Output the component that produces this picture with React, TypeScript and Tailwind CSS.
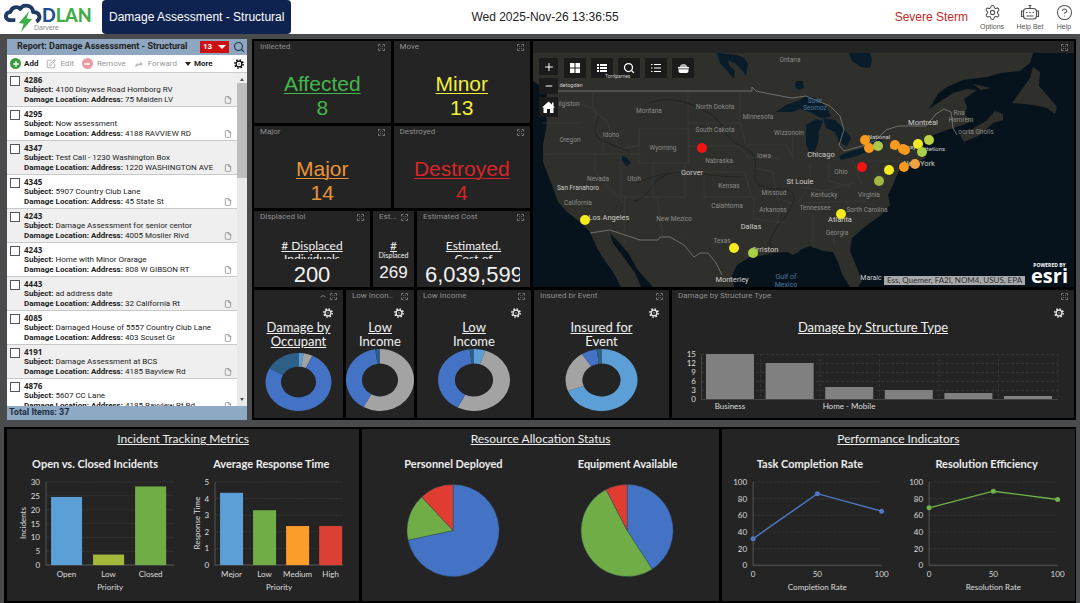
import React from 'react'
import {
  Search,
  SquarePen,
  File,
  Plus,
  Minus,
  Forward,
  Settings,
  CircleQuestionMark,
} from 'lucide-react'

const reports = [
  { id: '4286', subject: '4100 Disywse Road Homborg RV', address: '75 Maiden LV' },
  { id: '4295', subject: 'Now assessment', address: '4188 RAVVIEW RD' },
  { id: '4347', subject: 'Test Call - 1230 Washington Box', address: '1220 WASHINGTON AVE' },
  { id: '4345', subject: '5907 Country Club Lane', address: '45 State St' },
  { id: '4243', subject: 'Damage Assessment for senior centor', address: '4005 Mosiler Rivd' },
  { id: '4243', subject: 'Home with Minor Orarage', address: '808 W GIBSON RT' },
  { id: '4443', subject: 'ad address date', address: '32 Calífornía Rt' },
  { id: '4085', subject: 'Damaged House of 5557 Country Club Lane', address: '403 Scuset Gr' },
  { id: '4191', subject: 'Damage Assessment at BCS', address: '4185 Bayview Rd' },
  { id: '4876', subject: '5607 CC Lane', address: '4185 Bayview Rt Rd' },
]

const stats = [
  { label: 'Inliected', title: 'Affected', value: 8, color: 'text-[#45b649]' },
  { label: 'Move', title: 'Minor', value: 13, color: 'text-[#f2ee3a]' },
  { label: 'Major', title: 'Major', value: 14, color: 'text-[#e8953a]' },
  { label: 'Destroyed', title: 'Destroyed', value: 4, color: 'text-[#d9252a]' },
]

const LIGHT = '#5b9fd6'
const BLUE = '#4472c4'
const DARK = '#2d6088'
const GRAY = '#a3a3a3'
const GREEN = '#70ad47'
const RED = '#e03c31'

// each slice ends at the given clockwise angle, the first one starts at the top
type Slice = { to: number; color: string }

const donuts: {
  label: string
  lines: string[]
  underlined: number
  rx: number
  ry: number
  slices: Slice[]
}[] = [
  {
    label: '',
    lines: ['Damage by', 'Occupant'],
    underlined: 2,
    rx: 33,
    ry: 29,
    slices: [
      { to: 9, color: LIGHT },
      { to: 25, color: GRAY },
      { to: 298, color: BLUE },
      { to: 360, color: DARK },
    ],
  },
  {
    label: 'Low Incon..',
    lines: ['Low', 'Income'],
    underlined: 1,
    rx: 34,
    ry: 31,
    slices: [
      { to: 209, color: GRAY },
      { to: 352, color: BLUE },
      { to: 360, color: DARK },
    ],
  },
  {
    label: 'Low Income',
    lines: ['Low', 'Income'],
    underlined: 1,
    rx: 36,
    ry: 31,
    slices: [
      { to: 18, color: LIGHT },
      { to: 207, color: GRAY },
      { to: 353, color: BLUE },
      { to: 360, color: DARK },
    ],
  },
  {
    label: 'Insured br Event',
    lines: ['Insured for', 'Event'],
    underlined: 1,
    rx: 36,
    ry: 31,
    slices: [
      { to: 249, color: LIGHT },
      { to: 327, color: GRAY },
      { to: 352, color: BLUE },
      { to: 360, color: DARK },
    ],
  },
]

const structureBars = [15, 12, 4, 3, 2, 1]

const states: [string, number, number][] = [
  ['Montana', 116, 60],
  ['North Dokota', 182, 56],
  ['Minnesota', 225, 66],
  ['South Cakota', 182, 79],
  ['Wizzonoin', 256, 82],
  ['Oregon', 37, 89],
  ['Idoho', 78, 84],
  ['Wyoming', 130, 97],
  ['Nabraska', 186, 110],
  ['Iowa', 231, 105],
  ['Nevada', 65, 128],
  ['Utoh', 101, 128],
  ['Kensas', 196, 135],
  ['Missoud', 241, 142],
  ['California', 45, 152],
  ['Calahtoma', 194, 155],
  ['Arkanoss', 240, 159],
  ['New Mezico', 141, 168],
  ['Texas', 189, 190],
  ['Ontana', 257, 9],
  ['Ohio', 308, 121],
  ['Kentucky', 291, 144],
  ['Virginia', 336, 144],
  ['Tennessee', 282, 157],
  ['Sorth Carolina', 334, 159],
  ['Georgia', 304, 182],
  ['ilgiston', 36, 53],
  ['Rna', 426, 62],
  ['Hamrem', 428, 69],
  ['oorta Gholls', 443, 81],
]

const cities: [string, number, number][] = [
  ['San Franahoro', 45, 137],
  ['Los Angeles', 76, 167],
  ['Gorver', 159, 122],
  ['Dallas', 218, 176],
  ['Orriston', 232, 199],
  ['Monterley', 199, 229],
  ['Chicago', 288, 104],
  ['St Louie', 267, 131],
  ['Montreal', 390, 72],
  ['New York', 386, 113],
  ['Atlanta', 307, 169],
]

const pins: [number, number, string][] = [
  [52, 167, '#f4ea1e'],
  [169, 95, '#f01414'],
  [201, 195, '#f4ea1e'],
  [220, 200, '#a8cf45'],
  [332, 87, '#f79a1e'],
  [336, 95, '#f79a1e'],
  [345, 93, '#a8c94a'],
  [362, 92, '#f79a1e'],
  [370, 96, '#f79a1e'],
  [372, 97, '#f79a1e'],
  [385, 91, '#f4ea1e'],
  [389, 99, '#a8cf45'],
  [396, 87, '#b9d445'],
  [329, 114, '#f01414'],
  [356, 117, '#f4ea1e'],
  [371, 114, '#f79a1e'],
  [382, 111, '#f0a03c'],
  [346, 128, '#a3b842'],
  [308, 161, '#f4ea1e'],
]

function arc(cx: number, cy: number, rx: number, ry: number, irx: number, iry: number, from: number, to: number) {
  const at = (deg: number, x: number, y: number) => {
    const rad = (deg * Math.PI) / 180
    return `${cx + x * Math.sin(rad)} ${cy - y * Math.cos(rad)}`
  }
  const large = to - from > 180 ? 1 : 0
  return `M${at(from, rx, ry)} A${rx} ${ry} 0 ${large} 1 ${at(to, rx, ry)} L${at(to, irx, iry)} A${irx} ${iry} 0 ${large} 0 ${at(from, irx, iry)} Z`
}

function Slices({ cx, cy, rx, ry, hole, slices }: { cx: number; cy: number; rx: number; ry: number; hole: number; slices: Slice[] }) {
  return (
    <>
      {slices.map((slice, i) => (
        <path
          key={i}
          d={arc(cx, cy, rx, ry, rx * hole, ry * hole, i ? slices[i - 1].to : 0, slice.to)}
          fill={slice.color}
        />
      ))}
    </>
  )
}

function Gear({ className }: { className: string }) {
  return (
    <svg className={className} viewBox="0 0 24 24" fill="none" stroke="currentColor">
      <circle cx="12" cy="12" r="7" strokeWidth="2.8" />
      <circle cx="12" cy="12" r="10" strokeWidth="3.4" strokeDasharray="3.8 4.05" />
      <circle cx="12" cy="12" r="1" strokeWidth="1.2" />
    </svg>
  )
}

function ExpandIcon() {
  return (
    <svg className="size-[7px]" viewBox="0 0 14 14" fill="none" stroke="#8c8c8c" strokeWidth="1.6">
      <path d="M1 5V1h4M9 1h4v4M13 9v4H9M5 13H1V9M4 4l1.500 1.500M10 4L8.500 5.500M4 10l1.500-1.500M10 10L8.500 8.500" />
    </svg>
  )
}

function Tile({ label, className = '', caret = false, children }: { label: string; className?: string; caret?: boolean; children?: React.ReactNode }) {
  return (
    <section className={`flex min-w-0 flex-col overflow-hidden bg-[#242424] ${className}`}>
      <header className="flex h-3 shrink-0 items-center gap-1 px-1.5 text-left text-[8px] text-[#8f8f8f]">
        <span className="min-w-0 grow truncate font-['Roboto',sans-serif]">{label}</span>
        {caret && (
          <svg className="h-1 w-1.5" viewBox="0 0 12 6" fill="none" stroke="#999" strokeWidth="1.6">
            <path d="M1 5q5-6 10 0" />
          </svg>
        )}
        <button aria-label={`Expand ${label}`}>
          <ExpandIcon />
        </button>
      </header>
      {children}
    </section>
  )
}

function Logo() {
  return (
    <div className="relative flex h-full w-[98px] items-center pl-1">
      <svg className="h-[30px] w-[38px]" viewBox="0 0 108 86" fill="none">
        <path
          d="M32 52H14c-14-5-11-23 4-23 4-15 19-18 28-9 9-15 36-12 37 9 20-1 24 19 9 27"
          stroke="#1f3a63"
          strokeWidth="11"
          strokeLinejoin="round"
        />
        <path d="M72 26L42 60l14 2-8 24 32-37-16-2z" fill="#3fae49" />
      </svg>
      <span className="pb-1 font-['Lato',sans-serif] text-[18px] leading-5 font-black text-[#3fae49]">
        <span className="text-[#1f4e8c]">D</span>LAN
      </span>
      <span className="absolute bottom-0.5 left-[34px] text-[7px] leading-2 text-[#888]">Darvere</span>
    </div>
  )
}

function TopBar() {
  return (
    <header className="flex h-[34px] items-stretch bg-white">
      <Logo />
      <h1 className="ml-1 flex items-center rounded bg-[#0f2350] px-[7px] text-[12px] text-white">
        Damage Assessment - Structural
      </h1>
      <time className="grow self-center pr-24 text-center text-[12px] text-[#222]">Wed 2025-Nov-26 13:36:55</time>
      <span className="mr-2 self-center text-[12px] text-[#c4281f]">Severe Sterm</span>
      <nav className="flex items-center gap-1 pr-1 text-[7px] leading-2 text-[#555]">
        <button className="flex w-8 flex-col items-center gap-0.5">
          <Settings className="size-[17px]" strokeWidth={1.5} />
          Options
        </button>
        <button className="flex w-9 flex-col items-center gap-0.5">
          <svg className="h-[17px] w-5" viewBox="0 0 40 34" fill="none" stroke="currentColor" strokeWidth="2.4">
            <rect x="7" y="9" width="26" height="21" rx="6" />
            <path d="M20 9V3M17 3h6M7 14H3v11h4M33 14h4v11h-4M12 17h3M18.500 17h3M25 17h3M13 24h14" />
          </svg>
          Help Bet
        </button>
        <button className="flex w-6 flex-col items-center gap-0.5">
          <CircleQuestionMark className="size-[17px]" strokeWidth={1.5} />
          Help
        </button>
      </nav>
    </header>
  )
}

function ReportList() {
  return (
    <aside className="flex flex-col bg-white font-['Roboto',sans-serif] text-[8px] text-[#222]">
      <div className="flex h-4 items-center bg-[#8ea6bf] pr-0.5 pl-2.5">
        <h2 className="grow text-[9px] font-bold whitespace-nowrap">Report: Damage Assesssment - Structural</h2>
        <button className="flex h-3 w-[29px] items-center justify-center gap-1.5 bg-[#cc1111] font-bold text-white">
          13
          <svg className="h-1 w-2" viewBox="0 0 8 4" fill="currentColor">
            <path d="M0 0h8L4 4z" />
          </svg>
        </button>
        <button aria-label="Search" className="ml-1">
          <Search className="size-3 text-[#1c3550]" strokeWidth={2.2} />
        </button>
      </div>
      <div className="flex h-[18px] items-center border-b border-[#ccc] px-[3px] text-[#999]">
        <button className="flex items-center gap-[3px] font-bold text-[#222]">
          <span className="flex size-[11px] items-center justify-center rounded-full bg-[#3b9b3f] text-white">
            <Plus className="size-2" strokeWidth={4} />
          </span>
          Add
        </button>
        <button className="ml-2 flex items-center gap-1">
          <SquarePen className="size-2.5" strokeWidth={1.8} />
          Edit
        </button>
        <button className="ml-2 flex items-center gap-1">
          <span className="flex size-[11px] items-center justify-center rounded-full bg-[#ee9aa2] text-white">
            <Minus className="size-2" strokeWidth={4} />
          </span>
          Remove
        </button>
        <button className="ml-2 flex items-center gap-1">
          <Forward className="size-2.5 fill-[#bbb] text-[#bbb]" />
          Forward
        </button>
        <button className="ml-2 flex items-center gap-[3px] font-bold text-[#222]">
          <svg className="h-1 w-1.5" viewBox="0 0 6 4" fill="currentColor">
            <path d="M0 0h6L3 4z" />
          </svg>
          More
        </button>
        <button aria-label="List settings" className="ml-auto text-black">
          <Gear className="size-2.5" />
        </button>
      </div>
      <div className="flex min-h-0 grow basis-0 overflow-hidden">
        <ul className="grow">
          {reports.map((report, i) => (
            <li key={i} className="flex h-[34px] border-b border-[#c8c8c8] odd:bg-[#efefef]">
              <input
                type="checkbox"
                aria-label={`Select report ${report.id}`}
                className="mt-[3px] ml-[3px] size-[10px] shrink-0 appearance-none border border-[#555] bg-white"
              />
              <div className="ml-1 grow pt-0.5 leading-[10px] whitespace-nowrap">
                <p className="font-['Open_Sans',sans-serif] font-bold">{report.id}</p>
                <p>
                  <b>Subject:</b> {report.subject}
                </p>
                <p>
                  <b>Damage Location: Address:</b> {report.address}
                </p>
              </div>
              <File className="mr-[5px] mb-0.5 size-2 self-end text-[#777]" strokeWidth={2} />
            </li>
          ))}
        </ul>
        <div className="flex w-[10px] flex-col items-center justify-between bg-[#e9e9e9] text-[#555]">
          <div className="flex h-[105px] w-full flex-col items-center bg-linear-to-b from-[#eee] from-10% to-[#bdbdbd] to-10% pt-1">
            <svg className="h-1 w-1" viewBox="0 0 4 4" fill="currentColor">
              <path d="M0 4h4L2 1z" />
            </svg>
          </div>
          <svg className="mb-1 h-1 w-1" viewBox="0 0 4 4" fill="currentColor">
            <path d="M0 0h4L2 3z" />
          </svg>
        </div>
      </div>
      <footer className="flex h-[14px] items-center bg-[#8ea9c4] px-0.5 text-[9px] font-bold text-[#1e2f42]">
        Total Items: 37
      </footer>
    </aside>
  )
}

const mapButton = 'flex h-5 w-[22px] items-center justify-center bg-[#1b1b1b]'
const mapSideButton = 'flex w-[19px] items-center justify-center bg-[#1b1b1b]'

function MapTile() {
  return (
    <Tile label="">
      <div className="relative grow overflow-hidden">
        <svg
          className="absolute inset-0 h-full w-full font-['Roboto',sans-serif]"
          viewBox="0 0 541 234"
          preserveAspectRatio="xMidYMid slice"
        >
          <rect width="541" height="234" fill="#06131d" />
          {/* mainland */}
          <path
            fill="#2f302c"
            d="M0 0H500L497 10 487 18 467 20 454 24 430 27 414 34 405 41 396 56 408 48 420 40 434 36 444 37 431 46 434 54 432 62 440 68 430 72 414 77 400 82 390 88 388 96 392 105 380 112 367 116 363 124 360 132 355 142 357 152 347 163 334 172 319 185 317 198 324 215 329 228 325 234H317L309 221 305 209 300 199 290 198 277 193 267 197 266 199 260 202 254 199 240 200 227 203 217 204 204 212 199 222 201 234H120L104 216 96 201 84 187 77 181 80 190 92 206 102 220 108 234H88L80 219 72 208 64 195 57 179 47 169 34 159 25 149 20 135 15 122 10 109 10 92 14 70 12 50 14 42 6 32 0 28z"
          />
          <path fill="#2f302c" d="M500 14l-3 11-10 14-8 11 22 2 13 3 8 6 2-7-10-12-8-9 1-14zM427 82l4 7 16-7 13-12 10-3v-6l-8-3-9 10-14 8zM440 31l18 4-10 2z" />
          {/* lakes and bays */}
          <path
            fill="#091c2a"
            d="M316 0l3 8 9 6 9 1 2-8-2-7zM184 0l3 10 8 9 6 7 1-8-6-6-1-5 8 4 6 6 4 6 2-12-4-6-7-3zM263 28l7 0 1 7-6 2-3-4zM243 59l10-7 12-4 8-5 11 2 10 9 4 10-10 1-11-6-10-3-8 3zM273 72l10-6 7 2-4 10-1 12-3 8-6 1-3-8zM290 65l12 2 10 10 6 8-4 8-8-4-4-10-9-4zM306 103l12-5 18-4 2 3-14 6-16 4zM334 88l14-3 2 4-12 2zM89 103l5 2 4 5-4 3-5-5z"
          />
          {/* state borders */}
          <path
            stroke="#3d3e3a"
            strokeWidth="0.7"
            fill="none"
            d="M14 50l18 3 16-2 14 5v20l8 12v14M12 101h96M10 70l36 0M60 38v20l14 10 4 14 10 14 18-4V76M106 76h50v34h-50zM120 110v34M62 101v18l30 32M88 101v43h64V110M92 144v46M152 119h60M155 38v72M155 70h52M156 93h50l10 12h30M207 38v32l6 22M171 144h50v22l30 4M171 120v24M212 119l6 25M213 92h40l8 14M222 115l18 4 4 26 16 6M124 144l6 40M130 184h18M248 151l-4 20M260 80v26M270 150l64-2M277 110v20l-12 20M296 110v18l22 6M280 163v32M296 163l6 30M318 163l-14 4M320 108l8 22M330 108h40M344 120l16 12M270 134l20 4 30-8"
          />
          {/* rivers */}
          <path
            stroke="#20231f"
            strokeWidth="0.9"
            fill="none"
            d="M116 50q20-8 44 2t28 20q6 16 22 22t12 24 24 18 4 30-4 30M100 148q10 0 20-16t40-12 50 4M66 62q-10 20 4 26t26 10M84 152l-2 4M136 120q-20 4-32 10"
          />
          {/* national border */}
          <path
            stroke="#7f807a"
            strokeWidth="0.8"
            fill="none"
            d="M16 38h203v-4l4 4 14 3 22 4 14-2 24 10 10 10 4 14-5 15 5 6 18-5 14-6 10-10 12-4h28l10-12 8-5 7 3 2 16 4 7M57 180l20-3 30 10h18l2-3h10l14 8 10 12 6-4h8l8 10 6 12"
          />
          <g fill="#8d8d87" fontSize="6.5" textAnchor="middle">
            {states.map(([name, x, y]) => (
              <text key={name} x={x} y={y}>
                {name}
              </text>
            ))}
          </g>
          <g fill="#4c7898" fontSize="6.5" textAnchor="middle">
            <text x="282" y="50">Suite</text>
            <text x="282" y="57">Seomoz</text>
            <text x="253" y="226" fontSize="7">Gulf of</text>
            <text x="253" y="234" fontSize="7">Mexico</text>
          </g>
          <g fill="#cfcfca" fontSize="7.5" textAnchor="middle">
            {cities.map(([name, x, y]) => (
              <text key={name} x={x} y={y} fontSize={name.length > 12 ? 6.5 : 7.5}>
                {name}
              </text>
            ))}
            <text x="38" y="34" fontSize="5.5">detogdan</text>
            <text x="346" y="86" fontSize="6">National</text>
            <text x="361" y="96" fontSize="6">Utt</text>
            <text x="376" y="96" fontSize="6">away</text>
            <text x="402" y="98" fontSize="6">ttetions</text>
            <text x="338" y="227" fontSize="7">Maraic</text>
          </g>
          {pins.map(([x, y, color], i) => (
            <circle key={i} cx={x} cy={y} r="5" fill={color} />
          ))}
        </svg>

        <div className="absolute top-[5px] left-1.5 flex gap-1.5 text-white">
          <div className="flex flex-col gap-[3px]">
            <button aria-label="Zoom in" className={`${mapSideButton} h-[17px]`}>
              <Plus className="size-3" strokeWidth={2} />
            </button>
            <button aria-label="Zoom out" className={`${mapSideButton} h-4`}>
              <Minus className="size-2.5" strokeWidth={2.4} />
            </button>
            <button aria-label="Home" className={`${mapSideButton} h-5`}>
              <svg className="size-[13px]" viewBox="0 0 13 13" fill="currentColor">
                <path d="M6.500 0.500L10 3.500V1.500h1.500v3.400L13 6.500h-1.500V12H8V8H5v4H1.500V6.500H0z" />
              </svg>
            </button>
          </div>
          <div className="flex gap-[5px]">
            <button aria-label="Basemaps" className={mapButton}>
              <svg className="size-2.5" viewBox="0 0 10 10" fill="currentColor">
                <path d="M0 0h4.500v4.500H0zM5.500 0H10v4.500H5.500zM0 5.500h4.500V10H0zM5.500 5.500H10V10H5.500z" />
              </svg>
            </button>
            <button aria-label="Layers" className={mapButton}>
              <svg className="h-2 w-2.5" viewBox="0 0 10 8" fill="currentColor">
                <path d="M0 0h2v2H0zM3 0h7v2H3zM0 3h2v2H0zM3 3h7v2H3zM0 6h2v2H0zM3 6h7v2H3z" />
              </svg>
            </button>
            <button aria-label="Search map" className={mapButton}>
              <Search className="size-3" strokeWidth={2.5} />
            </button>
            <button aria-label="Legend" className={mapButton}>
              <svg className="size-2.5" viewBox="0 0 10 10" fill="currentColor">
                <path d="M0 1h1.500v1H0zM3 1h7v1H3zM0 4.500h1.500v1H0zM3 4.500h7v1H3zM0 8h1.500v1H0zM3 8h7v1H3z" />
              </svg>
            </button>
            <button aria-label="Print" className={mapButton}>
              <svg className="size-[11px]" viewBox="0 0 11 11" fill="currentColor">
                <path d="M1.500 4.500Q2 1 5.500 1t4 3.500z" fill="#b5b5b5" />
                <path d="M0 4h11v1.500H0zM.5 6.200h10V8q0 2-2 2h-6q-2 0-2-2z" />
              </svg>
            </button>
          </div>
        </div>
        <span className="absolute top-5 left-[72px] font-['Roboto',sans-serif] text-[5px] leading-[6px] text-[#ccc]">
          Torrlparnes
        </span>

        <div className="absolute right-1.5 bottom-0.5 flex items-end gap-1.5">
          <span className="bg-[#c4c4c4]/85 px-[3px] text-[8px] leading-[9px] text-[#333]">
            Ess, Quemer, FA2I, NOM4, USUS, EPA
          </span>
          <span className="flex flex-col items-center font-['Open_Sans',sans-serif] font-bold text-white">
            <span className="text-[5px] leading-1">POWERED BY</span>
            <span className="text-[20px] leading-[18px]">esri</span>
          </span>
        </div>
      </div>
    </Tile>
  )
}

function StructureChart() {
  return (
    <svg className="mt-3.5 h-auto w-full" viewBox="0 0 402 66" fill="#ddd" fontSize="8">
      <g stroke="#343434" strokeWidth="1" strokeDasharray="3 2">
        {[0, 1, 2, 3, 4].map((i) => (
          <path key={i} d={`M29 ${6.5 + i * 9}H386`} />
        ))}
        {[1, 2, 3, 4, 5, 6].map((i) => (
          <path key={i} d={`M${29 + i * 59.5} 6V51`} />
        ))}
      </g>
      <path d="M29.500 6V51.500H386" stroke="#444" fill="none" />
      {[15, 12, 9, 6, 3, 0].map((tick, i) => (
        <text key={tick} x="24" y={9 + i * 9} textAnchor="end">
          {tick}
        </text>
      ))}
      {structureBars.map((value, i) => (
        <rect key={i} x={34 + i * 59.6} y={51 - value * 3} width="48" height={value * 3} fill="#808080" />
      ))}
      <text x="58" y="61" textAnchor="middle">Business</text>
      <text x="177" y="61" textAnchor="middle">Home - Mobile</text>
    </svg>
  )
}

function Dashboard() {
  return (
    <main className="flex min-w-0 flex-col gap-[3px] bg-black p-[2px] font-['Lato',sans-serif] text-[#f2f2f2]">
      <div className="grid grid-cols-[276fr_541fr] gap-[3px]">
        <div className="flex min-w-0 flex-col gap-[3px]">
          <div className="grid grid-cols-2 gap-[3px]">
            {stats.map((stat) => (
              <Tile key={stat.label} label={stat.label} className="h-[82px]">
                <div
                  className={`flex grow flex-col items-center justify-end pb-[3px] font-['Liberation_Sans',sans-serif] text-[21px] leading-6 ${stat.color}`}
                >
                  <a href="#" className="underline decoration-1 underline-offset-2">
                    {stat.title}
                  </a>
                  <span>{stat.value}</span>
                </div>
              </Tile>
            ))}
          </div>
          <div className="grid grid-cols-[116fr_41fr_113fr] gap-[3px] text-center whitespace-nowrap">
            <Tile label="Displaced lol" className="h-[76px]">
              <h3 className="mt-4 h-5 overflow-hidden text-[12px] leading-[13px] underline">
                # Displaced
                <br />
                Individuals
              </h3>
              <p className="mt-1 font-['Liberation_Sans',sans-serif] text-[22px] leading-6">200</p>
            </Tile>
            <Tile label="Est..." className="h-[76px]">
              <h3 className="mt-4 flex h-5 flex-col items-center text-[7px] leading-[7px]">
                <span className="text-[12px] leading-[13px] underline">#</span>
                Displaced
              </h3>
              <p className="mt-1 font-['Liberation_Sans',sans-serif] text-[17px] leading-5">269</p>
            </Tile>
            <Tile label="Estimated Cost" className="h-[76px]">
              <h3 className="mt-4 h-5 overflow-hidden text-[12px] leading-[13px] underline">
                Estimated.
                <br />
                Cost of
              </h3>
              <p className="mt-1 mr-2.5 ml-2 overflow-hidden text-left font-['Liberation_Sans',sans-serif] text-[22px] leading-6">
                6,039,599
              </p>
            </Tile>
          </div>
        </div>
        <MapTile />
      </div>

      <div className="grid grid-cols-[89fr_68fr_114fr_135fr_402fr] gap-[3px]">
        {donuts.map((donut, i) => (
          <Tile key={i} label={donut.label} caret={i === 0} className="h-[128px]">
            <button aria-label="Chart settings" className="mt-1.5 mr-2.5 self-end">
              <Gear className="size-2.5" />
            </button>
            <h3 className="mt-0.5 text-center text-[13px] leading-[14px]">
              {donut.lines.map((line, n) => (
                <span key={line} className={n < donut.underlined ? 'block underline' : 'block'}>
                  {line}
                </span>
              ))}
            </h3>
            <svg className="mt-px h-[62px] w-full" viewBox={`0 0 ${donut.rx * 2} 62`}>
              <Slices cx={donut.rx} cy={62 - donut.ry} rx={donut.rx} ry={donut.ry} hole={0.53} slices={donut.slices} />
            </svg>
          </Tile>
        ))}
        <Tile label="Damage by Structure Type">
          <button aria-label="Chart settings" className="mt-1.5 mr-2.5 self-end">
            <Gear className="size-2.5" />
          </button>
          <h3 className="mt-0.5 text-center text-[13px] leading-[14px] underline">Damage by Structure Type</h3>
          <StructureChart />
        </Tile>
      </div>
    </main>
  )
}

type Bar = { label: string; value: number; color: string }

function BarChart({ bars, max, step, yLabel, yLabelX, axis, barWidth, pitch }: { bars: Bar[]; max: number; step: number; yLabel: string; yLabelX: number; axis: number; barWidth: number; pitch: number }) {
  const y = (v: number) => 90 - (v / max) * 83
  const ticks = Array.from({ length: max / step + 1 }, (_, i) => i * step)
  return (
    <svg className="h-auto w-full" viewBox="0 0 176 124" fill="#ddd" fontSize="8">
      {ticks.map((tick) => (
        <g key={tick}>
          <path d={`M${axis} ${y(tick)}h128`} stroke="#333" strokeDasharray="3 1" />
          <text x={axis - 6} y={y(tick) + 3} textAnchor="end">
            {tick}
          </text>
        </g>
      ))}
      <path d={`M${axis} 7V90h128`} stroke="#555" fill="none" />
      {bars.map((bar, i) => {
        const x = axis + 5 + i * pitch
        return (
          <g key={bar.label}>
            <rect x={x} y={y(bar.value)} width={barWidth} height={90 - y(bar.value)} fill={bar.color} />
            <text x={x + barWidth / 2} y="102" textAnchor="middle">
              {bar.label}
            </text>
          </g>
        )
      })}
      <text x={axis + 64} y="115" textAnchor="middle">Priority</text>
      <text transform={`translate(${yLabelX} 48) rotate(-90)`} textAnchor="middle">
        {yLabel}
      </text>
    </svg>
  )
}

function LineChart({ values, color, xLabel }: { values: number[]; color: string; xLabel: string }) {
  const y = (v: number) => 90 - (v / 100) * 83
  const points = values.map((v, i) => [31 + i * 64, y(v)])
  return (
    <svg className="h-auto w-full" viewBox="0 0 176 124" fill="#ddd" fontSize="8">
      {[0, 20, 40, 60, 80, 100].map((tick) => (
        <g key={tick}>
          <path d={`M31 ${y(tick)}h128`} stroke="#333" strokeDasharray="3 1" />
          <text x="25" y={y(tick) + 3} textAnchor="end">
            {tick}
          </text>
        </g>
      ))}
      <path d="M31 7V90h128" stroke="#555" fill="none" />
      {[0, 50, 100].map((tick, i) => (
        <text key={tick} x={31 + i * 64} y="102" textAnchor="middle">
          {tick}
        </text>
      ))}
      <polyline points={points.map((p) => p.join(',')).join(' ')} stroke={color} strokeWidth="1.4" fill="none" />
      {points.map(([x, cy]) => (
        <circle key={x} cx={x} cy={cy} r="2.5" fill={color} />
      ))}
      <text x="95" y="115" textAnchor="middle">{xLabel}</text>
    </svg>
  )
}

function PieChart({ slices }: { slices: Slice[] }) {
  return (
    <svg className="h-auto w-full" viewBox="0 0 174 124" stroke="#2a4a5a" strokeWidth="0.4">
      <Slices cx={87} cy={55.5} rx={46} ry={46} hole={0} slices={slices} />
    </svg>
  )
}

function Panel({ title, className = '', children }: { title: string; className?: string; children: React.ReactNode }) {
  return (
    <section className={`bg-[#242424] ${className}`}>
      <h2 className="pt-[3px] text-center text-[12px] leading-[14px] underline">{title}</h2>
      <div className="mt-[11px] grid grid-cols-2">{children}</div>
    </section>
  )
}

function Chart({ title, children }: { title: string; children: React.ReactNode }) {
  return (
    <figure>
      <figcaption className="text-center text-[11px] leading-[14px] font-bold">{title}</figcaption>
      <div className="mt-1">{children}</div>
    </figure>
  )
}

function Metrics() {
  return (
    <div className="grid grow grid-cols-[352fr_356fr_353fr] gap-[3px] bg-black py-[2px] pr-px pl-[3px] font-['Lato',sans-serif] text-[#eee]">
      <Panel title="Incident Tracking Metrics">
        <Chart title="Open vs. Closed Incidents">
          <BarChart
            axis={39}
            barWidth={31}
            pitch={42}
            max={30}
            step={5}
            yLabel="Incidents"
            yLabelX={19}
            bars={[
              { label: 'Open', value: 24.6, color: LIGHT },
              { label: 'Low', value: 3.8, color: '#a5b83c' },
              { label: 'Closed', value: 28.4, color: GREEN },
            ]}
          />
        </Chart>
        <Chart title="Average Response Time">
          <BarChart
            axis={32}
            barWidth={23}
            pitch={33}
            max={5}
            step={1}
            yLabel="Response Time"
            yLabelX={17}
            bars={[
              { label: 'Mejor', value: 4.35, color: LIGHT },
              { label: 'Low', value: 3.3, color: GREEN },
              { label: 'Medium', value: 2.35, color: '#fb9d28' },
              { label: 'High', value: 2.35, color: '#db4035' },
            ]}
          />
        </Chart>
      </Panel>
      <Panel title="Resource Allocation Status" className="px-1">
        <Chart title="Personnel Deployed">
          <PieChart slices={[{ to: 258, color: BLUE }, { to: 317, color: GREEN }, { to: 360, color: RED }]} />
        </Chart>
        <Chart title="Equipment Available">
          <PieChart slices={[{ to: 147, color: BLUE }, { to: 333, color: GREEN }, { to: 360, color: RED }]} />
        </Chart>
      </Panel>
      <Panel title="Performance Indicators">
        <Chart title="Task Completion Rate">
          <LineChart values={[32, 86, 65]} color="#4f79c4" xLabel="Completion Rate" />
        </Chart>
        <Chart title="Resolution Efficiency">
          <LineChart values={[69, 89, 79]} color="#70b34a" xLabel="Resolution Rate" />
        </Chart>
      </Panel>
    </div>
  )
}

export default function App() {
  return (
    <div className="flex min-h-screen flex-col bg-[#4a4b4d] font-['Liberation_Sans',Arial,sans-serif]">
      <TopBar />
      <div className="flex grow flex-col gap-[7px] px-1 pt-[5px]">
        <div className="grid grid-cols-[240px_1fr] gap-[5px] pl-[3px]">
          <ReportList />
          <Dashboard />
        </div>
        <Metrics />
      </div>
    </div>
  )
}
